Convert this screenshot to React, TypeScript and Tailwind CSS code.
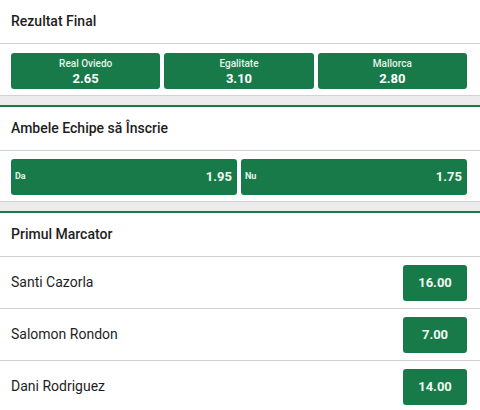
import React from "react";

const GREEN = "bg-[#187a48]";

function Header({ title }: { title: string }) {
  return (
    <div className="h-[44px] flex items-center px-[11px] border-b border-[#d0d0d0]">
      <span className="text-[14px] font-medium text-[#1e1e1e]">{title}</span>
    </div>
  );
}

function Separator() {
  return (
    <div className="border-t border-[#d2d2d2] bg-[#ececec] h-[9px] border-b-2 border-b-[#187a48] box-content" />
  );
}

export default function App() {
  const scorers = [
    ["Santi Cazorla", "16.00"],
    ["Salomon Rondon", "7.00"],
    ["Dani Rodriguez", "14.00"],
  ];
  return (
    <div className="w-[480px] h-[410px] overflow-hidden bg-white" style={{ fontFamily: "Roboto, 'Liberation Sans', sans-serif" }}>
      <Header title="Rezultat Final" />
      <div className="flex gap-[4px] pl-[11px] pr-[13px] pt-[9px] pb-[6px]">
        {[
          ["Real Oviedo", "2.65"],
          ["Egalitate", "3.10"],
          ["Mallorca", "2.80"],
        ].map(([l, o]) => (
          <div key={l} className={`flex-1 h-[36px] rounded-[3px] ${GREEN} flex flex-col items-center justify-center pt-[2px]`}>
            <span className="text-[10px] leading-[13px] text-[#e6f4ea] font-medium">{l}</span>
            <span className="text-[13px] leading-[17px] text-white font-bold">{o}</span>
          </div>
        ))}
      </div>
      <Separator />
      <Header title="Ambele Echipe să Înscrie" />
      <div className="flex gap-[4px] pl-[11px] pr-[13px] pt-[8px] pb-[6px]">
        {[
          ["Da", "1.95"],
          ["Nu", "1.75"],
        ].map(([l, o]) => (
          <div key={l} className={`flex-1 h-[36px] rounded-[3px] ${GREEN} flex items-center justify-between pl-[4px] pr-[5px]`}>
            <span className="text-[9px] text-[#e6f4ea] font-bold">{l}</span>
            <span className="text-[13px] text-[#f0f7f2] font-bold">{o}</span>
          </div>
        ))}
      </div>
      <Separator />
      <Header title="Primul Marcator" />
      {scorers.map(([n, o]) => (
        <div key={n} className="h-[52px] flex items-center justify-between pl-[11px] pr-[13px] border-b border-[#d0d0d0]">
          <span className="text-[14px] text-[#1e1e1e]">{n}</span>
          <div className={`w-[64px] h-[36px] rounded-[3px] ${GREEN} flex items-center justify-center`}>
            <span className="text-[13px] text-[#f0f7f2] font-bold">{o}</span>
          </div>
        </div>
      ))}
    </div>
  );
}
